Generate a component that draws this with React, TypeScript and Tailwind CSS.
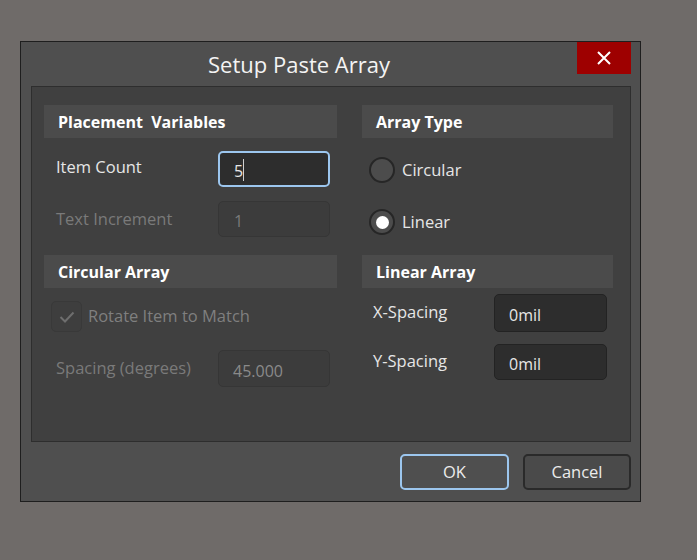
import React from "react";

const font = { fontFamily: '"Open Sans", "Noto Sans", sans-serif' };

function Header({ children }: { children: React.ReactNode }) {
  return (
    <div className="h-[33px] bg-[#4b4b4b] flex items-center pl-[14px] text-[16px] font-bold text-white">
      {children}
    </div>
  );
}

export default function App() {
  return (
    <div className="w-[697px] h-[560px] bg-[#6f6b69] pt-[41px] pl-[20px]" style={font}>
      <div className="w-[621px] h-[461px] bg-[#4f4f4f] border border-[#1e1e1e] flex flex-col">
        {/* title bar */}
        <div className="h-[44px] flex items-start">
          <div className="flex-1 h-[44px] flex items-center justify-center text-[22px] text-[#f4f4f4] pt-[1px]">
            Setup Paste Array
          </div>
          <div className="w-[54px] h-[32px] bg-[#9e0000] flex items-center justify-center mr-[9px]">
            <svg width="14" height="14" viewBox="0 0 14 14">
              <path d="M1 1 L13 13 M13 1 L1 13" stroke="#ffffff" strokeWidth="2" />
            </svg>
          </div>
        </div>
        {/* inner panel */}
        <div className="ml-[10px] mr-[9px] h-[356px] bg-[#404040] border border-[#2e2e2e] flex pt-[18px] pl-[12px]">
          {/* left column */}
          <div className="w-[293px] flex flex-col">
            <Header>Placement&nbsp; Variables</Header>
            <div className="mt-[13px] flex items-center h-[36px]">
              <div className="w-[174px] pl-[12px] text-[16.5px] text-[#e6e6e6] -mt-[4px]">Item Count</div>
              <div className="w-[112px] h-[36px] rounded-[5px] border-2 border-[#9cc6ee] bg-[#2d2d2d] flex items-center pl-[14px] text-[16px] text-[#e6e6e6]">
                <span className="mt-[3px]">5</span>
                <span className="w-px h-[22px] bg-[#d0d0d0] mt-[1px]"></span>
              </div>
            </div>
            <div className="mt-[14px] flex items-center h-[36px]">
              <div className="w-[174px] pl-[12px] text-[16.5px] text-[#7a7a7a]">Text Increment</div>
              <div className="w-[112px] h-[36px] rounded-[5px] border border-[#363636] bg-[#3c3c3c] flex items-center pl-[15px] text-[16px] text-[#7a7a7a]">
                <span className="mt-[3px]">1</span>
              </div>
            </div>
            <div className="mt-[18px]">
              <Header>Circular Array</Header>
            </div>
            <div className="mt-[13px] flex items-center h-[31px] pl-[7px]">
              <div className="w-[31px] h-[31px] rounded-[5px] border border-[#393939] bg-[#3e3e3e] flex items-center justify-center">
                <svg width="16" height="12" viewBox="0 0 16 12">
                  <path d="M1.5 6 L6 10.5 L14.5 1.5" stroke="#6e6e6e" strokeWidth="2" fill="none" />
                </svg>
              </div>
              <div className="ml-[6px] text-[16.5px] text-[#7f7f7f]">Rotate Item to Match</div>
            </div>
            <div className="mt-[18px] flex items-center h-[37px]">
              <div className="w-[174px] pl-[12px] text-[16.5px] text-[#7a7a7a]">Spacing (degrees)</div>
              <div className="w-[112px] h-[37px] rounded-[5px] border border-[#363636] bg-[#3c3c3c] flex items-center pl-[14px] text-[16px] text-[#8a8a8a]">
                <span className="mt-[4px]">45.000</span>
              </div>
            </div>
          </div>
          {/* right column */}
          <div className="ml-[25px] w-[251px] flex flex-col">
            <Header>Array Type</Header>
            <div className="mt-[19px] flex items-center h-[26px] pl-[7px]">
              <div className="w-[26px] h-[26px] rounded-full border-2 border-[#262626] bg-[#4c4c4c]"></div>
              <div className="ml-[7px] text-[16.5px] text-[#e6e6e6]">Circular</div>
            </div>
            <div className="mt-[26px] flex items-center h-[26px] pl-[7px]">
              <div className="w-[26px] h-[26px] rounded-full border-2 border-[#262626] bg-[#4c4c4c] flex items-center justify-center">
                <div className="w-[13px] h-[13px] rounded-full bg-white"></div>
              </div>
              <div className="ml-[7px] text-[16.5px] text-[#e6e6e6]">Linear</div>
            </div>
            <div className="mt-[20px]">
              <Header>Linear Array</Header>
            </div>
            <div className="mt-[6px] flex items-center h-[38px]">
              <div className="w-[132px] pl-[11px] text-[16.5px] text-[#e6e6e6] -mt-[2px]">X-Spacing</div>
              <div className="w-[113px] h-[38px] rounded-[5px] border border-[#232323] bg-[#2d2d2d] flex items-center pl-[14px] text-[16px] text-[#e6e6e6]">
                <span className="mt-[4px]">0mil</span>
              </div>
            </div>
            <div className="mt-[12px] flex items-center h-[36px]">
              <div className="w-[132px] pl-[11px] text-[16.5px] text-[#e6e6e6] -mt-[2px]">Y-Spacing</div>
              <div className="w-[113px] h-[36px] rounded-[5px] border border-[#232323] bg-[#2d2d2d] flex items-center pl-[14px] text-[16px] text-[#e6e6e6]">
                <span className="mt-[4px]">0mil</span>
              </div>
            </div>
          </div>
        </div>
        {/* footer */}
        <div className="flex justify-end mr-[9px] mt-[12px] gap-[14px]">
          <div className="w-[109px] h-[36px] rounded-[5px] border-2 border-[#9cc6ee] bg-[#4f4f4f] flex items-center justify-center text-[16.5px] text-[#ececec]">
            OK
          </div>
          <div className="w-[108px] h-[36px] rounded-[5px] border-2 border-[#2a2a2a] bg-[#4a4a4a] flex items-center justify-center text-[16.5px] text-[#ececec]">
            Cancel
          </div>
        </div>
      </div>
    </div>
  );
}
